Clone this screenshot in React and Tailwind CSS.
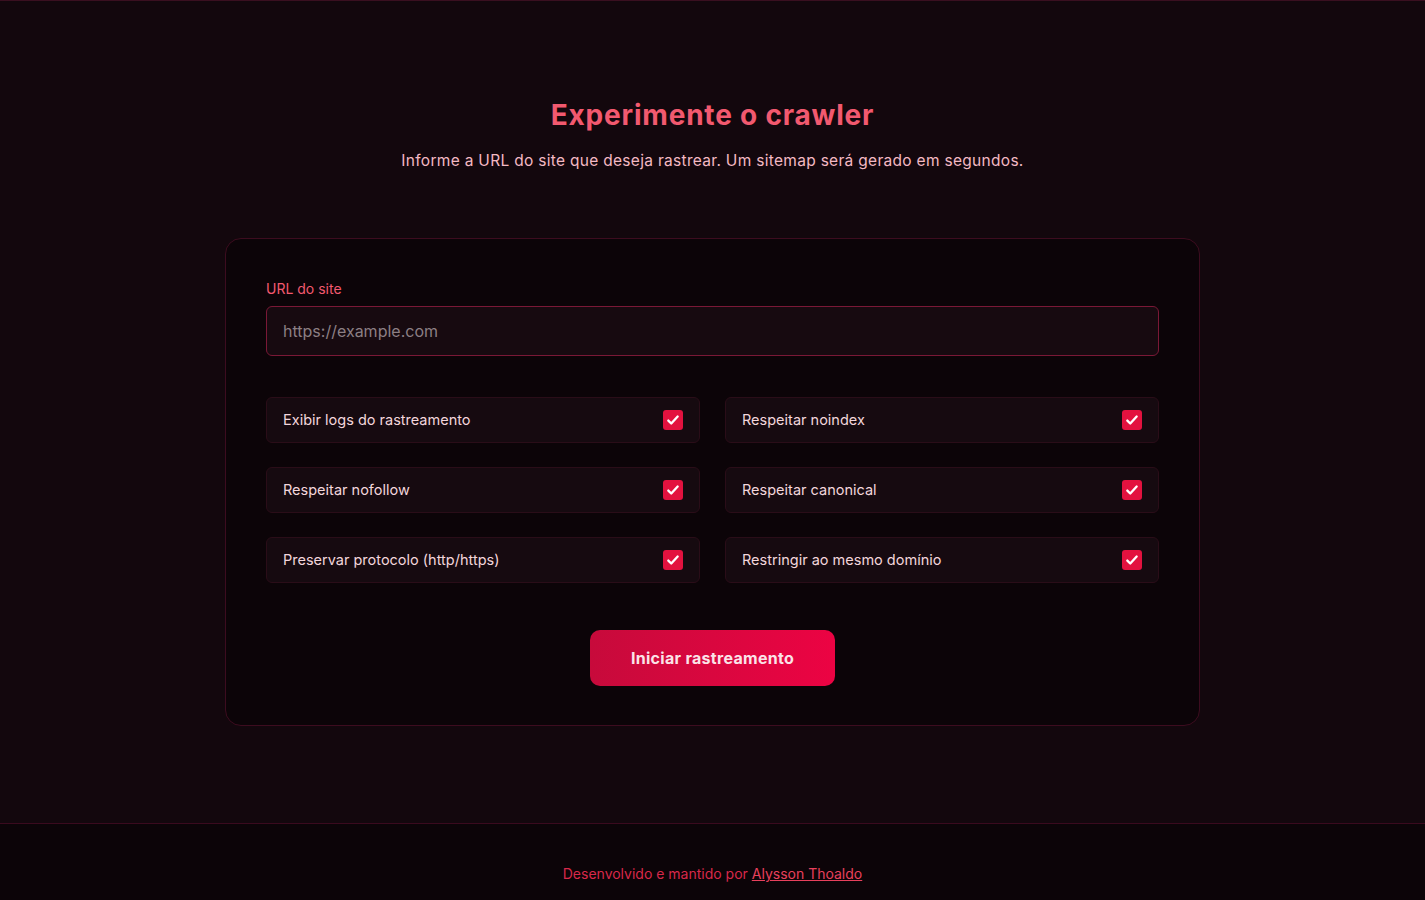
import React, { useState } from "react";

const OPTIONS = [
  "Exibir logs do rastreamento",
  "Respeitar noindex",
  "Respeitar nofollow",
  "Respeitar canonical",
  "Preservar protocolo (http/https)",
  "Restringir ao mesmo domínio",
];

function OptionRow({ label, checked, onToggle }) {
  return (
    <label className="flex h-[46px] items-center justify-between rounded-md border border-[#2a0d18] bg-[#160a10] pl-4 pr-4 cursor-pointer">
      <span className="text-[14.5px] text-[#f3d6dc]">{label}</span>
      <span
        onClick={onToggle}
        className={
          checked
            ? "flex h-5 w-5 items-center justify-center rounded-[3px] bg-[#e3123f]"
            : "flex h-5 w-5 items-center justify-center rounded-[3px] border border-[#6a1a30] bg-[#160a10]"
        }
      >
        {checked && (
          <svg width="14" height="14" viewBox="0 0 24 24" fill="none" stroke="white" strokeWidth="4" strokeLinecap="round" strokeLinejoin="round">
            <path d="M4 13l5 5L20 6" />
          </svg>
        )}
      </span>
    </label>
  );
}

export default function App() {
  const [checked, setChecked] = useState(OPTIONS.map(() => true));

  return (
    <div className="min-h-screen bg-[#13070d] font-['Inter',sans-serif] border-t border-[#3a0f20]">
      <main className="flex flex-col items-center pt-[96px] pb-[97px]">
        <h1 className="text-[28px] font-bold leading-[36px] text-[#f2596f] tracking-[0.8px]">
          Experimente o crawler
        </h1>
        <p className="mt-[16px] text-[15.5px] leading-6 text-[#f4b9c3] tracking-[0.3px]">
          Informe a URL do site que deseja rastrear. Um sitemap será gerado em segundos.
        </p>

        <div className="mt-[65px] w-[975px] rounded-2xl border border-[#3d0c1f] bg-[#0c0408] px-10 pt-[40px] pb-[39px]">
          <label className="block text-[14px] leading-5 text-[#f2596f]">URL do site</label>
          <input
            type="text"
            placeholder="https://example.com"
            className="mt-[7px] h-[50px] w-full rounded-md border border-[#7a1836] bg-[#170a10] px-4 text-[16px] text-[#f3d6dc] placeholder:text-[#8c7f84] outline-none"
          />

          <div className="mt-[41px] grid grid-cols-2 gap-x-[25px] gap-y-[24px]">
            {OPTIONS.map((label, i) => (
              <OptionRow
                key={label}
                label={label}
                checked={checked[i]}
                onToggle={() =>
                  setChecked((prev) => prev.map((v, j) => (j === i ? !v : v)))
                }
              />
            ))}
          </div>

          <div className="mt-[47px] flex justify-center">
            <button className="h-[56px] w-[245px] rounded-[10px] bg-gradient-to-r from-[#c70a3b] to-[#ec0343] text-[16px] font-bold text-[#fbe3e8] tracking-[0.3px]">
              Iniciar rastreamento
            </button>
          </div>
        </div>
      </main>

      <footer className="border-t border-[#3a0a1e] bg-[#0c0408] pt-[39px] pb-[40px] text-center">
        <p className="text-[14px] text-[#d8284a]">
          Desenvolvido e mantido por{" "}
          <a href="#" className="underline text-[#e8405c]">
            Alysson Thoaldo
          </a>
        </p>
      </footer>
    </div>
  );
}
